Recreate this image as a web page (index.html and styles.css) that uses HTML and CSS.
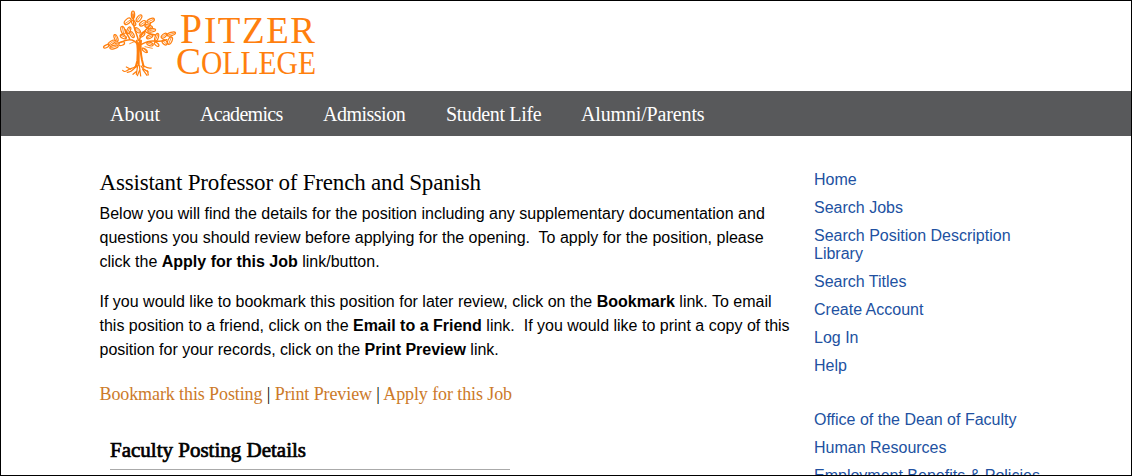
FILE: index.html
```html
<!DOCTYPE html>
<html lang="en">
<head>
    <meta charset="UTF-8">
    <meta name="viewport" content="width=device-width, initial-scale=1.0">
    <title>Pitzer College | Assistant Professor of French and Spanish</title>
    <link rel="stylesheet" href="styles.css">
</head>
<body>

    <div class="page">
        <header class="header">
            <svg class="logo" width="228" height="80" viewBox="0 0 228 80" role="img" aria-label="Pitzer College">
                <!-- Tree -->
                <g transform="translate(0 -1) scale(0.33333)" fill="none" stroke="#ff7f0e" stroke-width="3.6" stroke-linecap="round" stroke-linejoin="round">
                    <path stroke-width="6" d="M125 122c5 22 3 42 2 60l-5 19M138 122c-3 22-1 38 3 58l5 20M131 130v65"/>
                    <path stroke-width="4.5" d="M128 134c-8-12-20-16-30-14-14 2-22 10-37 10M133 128c0-15 6-27 18-37 9-8 14-13 16-23M130 121c-3-16-10-26-13-42l-3-36M139 133c12-6 23-11 36-10 15 1 27 4 40-4M104 117c-3-10-12-15-13-28M149 93c8 8 19 10 32 12"/>
                    <path d="M122 198c-6 8-15 6-23 12s-11 6-16 1M124 199c-9 9-13 17-27 18M128 197l-4 26M133 197l4 31M138 198c5 10 13 12 22 18M143 196c9 5 15 11 26 8M107 208l-13-7M157 212l3 13M125 214l-11 9M143 208l13 18M135 208l-8 19"/>
                    <!-- Leaf veins and twigs -->
                    <path stroke-width="2.5" d="M114 36v20M91 70l18-12M125 64l12-17M136 75l15-10M157 67l18-9M152 77l17 6M160 93l18-4M82 81l4 20M105 82l-8 17M78 106l15 7M107 97l8 14M121 84l13 12M136 110l12-11M156 114l15-7M189 102l-8 19M60 104l6 18M41 134l17-12M46 144l20-6M158 129l15 6M201 112l13-11M219 105l20-6M203 121l12 12M221 132l8-20M143 144l15 14M118 125l-14 6M150 140l22 5"/>
                    <!-- Leaves -->
                    <g>
                        <ellipse cx="114" cy="44" rx="5" ry="11"/>
                        <ellipse cx="98" cy="64" rx="12" ry="7" transform="rotate(-42 98 64)"/>
                        <ellipse cx="132" cy="55" rx="12" ry="6" transform="rotate(-55 132 55)"/>
                        <ellipse cx="116" cy="69" rx="9" ry="5" transform="rotate(60 116 69)"/>
                        <ellipse cx="143" cy="70" rx="11" ry="6" transform="rotate(-35 143 70)"/>
                        <ellipse cx="167" cy="62" rx="12" ry="6" transform="rotate(-24 167 62)"/>
                        <ellipse cx="161" cy="80" rx="12" ry="5" transform="rotate(18 161 80)"/>
                        <ellipse cx="170" cy="91" rx="12" ry="5" transform="rotate(-10 170 91)"/>
                        <ellipse cx="84" cy="91" rx="6" ry="12" transform="rotate(-18 84 91)"/>
                        <ellipse cx="101" cy="91" rx="5" ry="11" transform="rotate(24 101 91)"/>
                        <ellipse cx="85" cy="110" rx="10" ry="5" transform="rotate(26 85 110)"/>
                        <ellipse cx="111" cy="104" rx="10" ry="5" transform="rotate(58 111 104)"/>
                        <ellipse cx="128" cy="91" rx="10" ry="5" transform="rotate(42 128 91)"/>
                        <ellipse cx="142" cy="104" rx="9" ry="5" transform="rotate(-42 142 104)"/>
                        <ellipse cx="164" cy="110" rx="10" ry="5" transform="rotate(-24 164 110)"/>
                        <ellipse cx="185" cy="112" rx="5" ry="12" transform="rotate(18 185 112)"/>
                        <ellipse cx="63" cy="114" rx="5" ry="11" transform="rotate(-22 63 114)"/>
                        <ellipse cx="50" cy="128" rx="12" ry="5" transform="rotate(-32 50 128)"/>
                        <ellipse cx="34" cy="139" rx="9" ry="4" transform="rotate(-25 34 139)"/>
                        <ellipse cx="57" cy="141" rx="13" ry="5" transform="rotate(-16 57 141)"/>
                        <ellipse cx="80" cy="131" rx="9" ry="5" transform="rotate(-20 80 131)"/>
                        <ellipse cx="165" cy="132" rx="10" ry="5" transform="rotate(18 165 132)"/>
                        <ellipse cx="185" cy="133" rx="8" ry="4" transform="rotate(40 185 133)"/>
                        <ellipse cx="207" cy="107" rx="10" ry="5" transform="rotate(-40 207 107)"/>
                        <ellipse cx="229" cy="102" rx="13" ry="5" transform="rotate(-17 229 102)"/>
                        <ellipse cx="209" cy="127" rx="9" ry="6" transform="rotate(45 209 127)"/>
                        <ellipse cx="225" cy="122" rx="6" ry="12" transform="rotate(24 225 122)"/>
                        <ellipse cx="149" cy="151" rx="9" ry="4" transform="rotate(38 149 151)"/>
                    </g>
                </g>
                <!-- Wordmark -->
                <g class="wordmark">
                    <text x="85" y="42.3" font-size="43" textLength="22" lengthAdjust="spacingAndGlyphs">P</text>
                    <text x="109" y="42.3" font-size="37" textLength="111" lengthAdjust="spacing">ITZER</text>
                    <text x="81" y="73.3" font-size="38" textLength="25" lengthAdjust="spacingAndGlyphs">C</text>
                    <text x="106" y="73.3" font-size="33" textLength="115" lengthAdjust="spacingAndGlyphs">OLLEGE</text>
                </g>
            </svg>
        </header>

        <nav class="main-nav">
            <a class="nav-about" href="#">About</a>
            <a class="nav-academics" href="#">Academics</a>
            <a class="nav-admission" href="#">Admission</a>
            <a class="nav-student" href="#">Student Life</a>
            <a class="nav-alumni" href="#">Alumni/Parents</a>
        </nav>

        <div class="container">
            <main class="content">
                <h1>Assistant Professor of French and Spanish</h1>
                <p>Below you will find the details for the position including any supplementary documentation and questions you should review before applying for the opening.&nbsp; To apply for the position, please click the <strong>Apply for this Job</strong> link/button.</p>
                <p>If you would like to bookmark this position for later review, click on the <strong>Bookmark</strong> link. To email this position to a friend, click on the <strong>Email to a Friend</strong> link.&nbsp; If you would like to print a copy of this position for your records, click on the <strong>Print Preview</strong> link.</p>
                <div class="actions">
                    <a href="#">Bookmark this Posting</a> | <a href="#">Print Preview</a> | <a href="#">Apply for this Job</a>
                </div>
                <h2>Faculty Posting Details</h2>
            </main>

            <aside class="sidebar">
                <ul>
                    <li><a href="#">Home</a></li>
                    <li><a href="#">Search Jobs</a></li>
                    <li><a href="#">Search Position Description Library</a></li>
                    <li><a href="#">Search Titles</a></li>
                    <li><a href="#">Create Account</a></li>
                    <li><a href="#">Log In</a></li>
                    <li><a href="#">Help</a></li>
                </ul>
                <ul>
                    <li><a href="#">Office of the Dean of Faculty</a></li>
                    <li><a href="#">Human Resources</a></li>
                    <li><a href="#">Employment Benefits &amp; Policies</a></li>
                </ul>
            </aside>
        </div>
    </div>

</body>
</html>
```
FILE: styles.css
```css
* {
    box-sizing: border-box;
}
body {
    margin: 0;
    font-family: "Liberation Sans", Arial, sans-serif;
    font-size: 16px;
    color: #000;
    background-color: #fff;
}
a {
    text-decoration: none;
}
.page {
    height: 476px;
    border: 1px solid #000;
    overflow: hidden;
}
.header {
    height: 90px;
    padding-left: 94px;
}
.logo {
    display: block;
}
.wordmark {
    font-family: "Liberation Serif", serif;
    fill: #ff7f0e;
}
.main-nav {
    display: flex;
    gap: 40px;
    height: 45px;
    padding-left: 109px;
    background-color: #58595b;
    font-family: "Liberation Serif", serif;
    font-size: 20px;
    line-height: 47px;
}
.main-nav a {
    color: #fff;
    white-space: nowrap;
}
.nav-about {
    width: 50px;
}
.nav-academics {
    width: 83px;
    letter-spacing: -0.7px;
}
.nav-admission {
    width: 83px;
    letter-spacing: -0.5px;
}
.nav-student {
    width: 95px;
    letter-spacing: -0.35px;
}
.nav-alumni {
    width: 124px;
    letter-spacing: -0.15px;
}
.container {
    display: flex;
    padding: 33px 0 0 98.5px;
}
.content {
    width: 694px;
    margin-right: 20.5px;
}
h1 {
    margin: 0;
    padding-bottom: 6px;
    font-family: "Liberation Serif", serif;
    font-size: 23px;
    font-weight: normal;
    line-height: 27px;
    letter-spacing: -0.19px;
}
.content p {
    margin: 0 0 16px;
    line-height: 24px;
}
.actions {
    margin-top: 20px;
    font-family: "Liberation Serif", serif;
    font-size: 18px;
    line-height: 25px;
    letter-spacing: -0.1px;
}
.actions a {
    color: #cc7a29;
}
h2 {
    width: 400px;
    margin: 27px 0 0 10.5px;
    padding-bottom: 3px;
    border-bottom: 1px solid #aaa;
    font-family: "Liberation Serif", serif;
    font-size: 21px;
    font-weight: normal;
    line-height: 32px;
    -webkit-text-stroke: 0.7px #000;
}
.sidebar {
    width: 230px;
    padding-top: 2px;
}
.sidebar ul {
    margin: 0 0 36px;
    padding: 0;
    list-style: none;
}
.sidebar li {
    margin-bottom: 10px;
    line-height: 18px;
}
.sidebar a {
    color: #2151a1;
}
```
